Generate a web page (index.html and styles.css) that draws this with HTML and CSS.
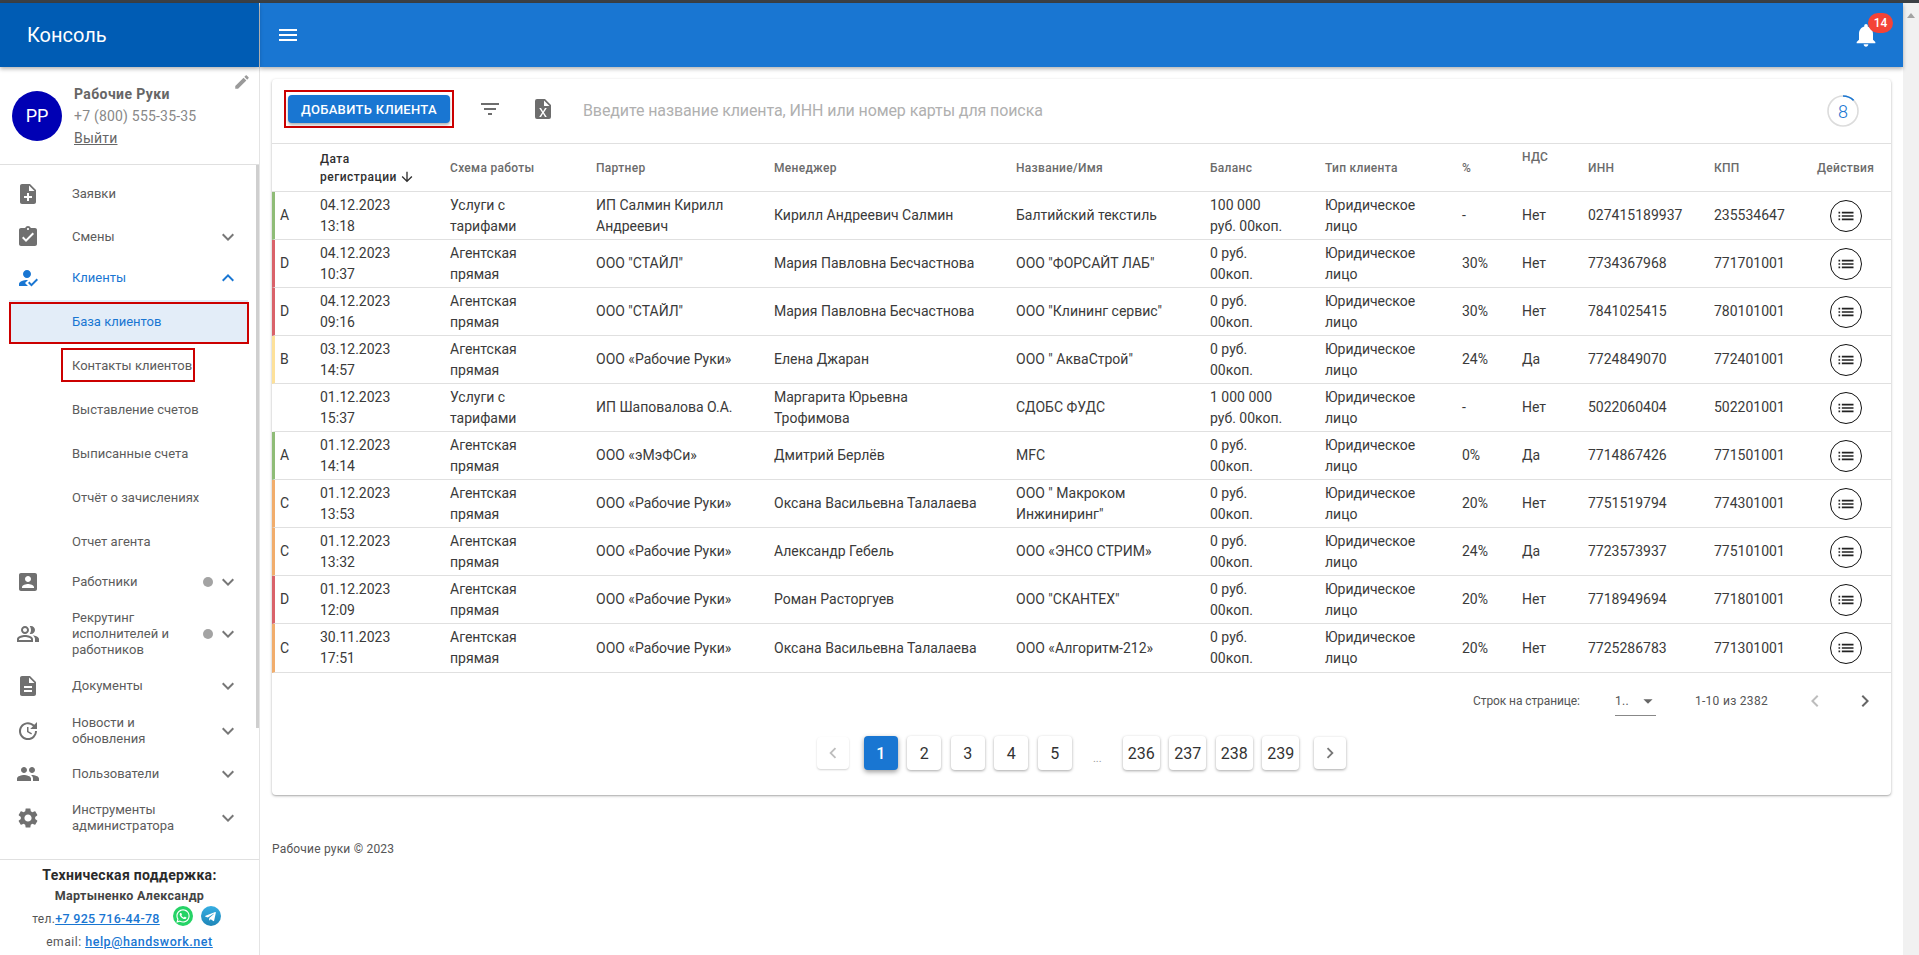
FILE: index.html
```html
<!DOCTYPE html>
<html lang="ru">
<head>
<meta charset="utf-8">
<title>Консоль</title>
<link rel="stylesheet" href="styles.css">
</head>
<body>
<svg class="sprite" aria-hidden="true">
  <symbol id="i-noteadd" viewBox="0 0 24 24"><path d="M14 2H6c-1.1 0-1.99.9-1.99 2L4 20c0 1.1.89 2 1.99 2H18c1.1 0 2-.9 2-2V8l-6-6zm2 14h-3v3h-2v-3H8v-2h3v-3h2v3h3v2zm-3-7V3.5L18.5 9H13z"/></symbol>
  <symbol id="i-assign" viewBox="0 0 24 24"><path d="M19 3h-4.18C14.4 1.84 13.3 1 12 1c-1.3 0-2.4.84-2.82 2H5c-1.1 0-2 .9-2 2v14c0 1.1.9 2 2 2h14c1.1 0 2-.9 2-2V5c0-1.1-.9-2-2-2zm-7 0c.55 0 1 .45 1 1s-.45 1-1 1-1-.45-1-1 .45-1 1-1zm-2 14l-4-4 1.41-1.41L10 14.17l6.59-6.59L18 9l-8 8z"/></symbol>
  <symbol id="i-howto" viewBox="0 0 24 24"><path d="M9 17l3-2.94c-.39-.04-.68-.06-1-.06-2.67 0-8 1.34-8 4v2h9l-3-3zm2-5c2.21 0 4-1.79 4-4s-1.79-4-4-4-4 1.79-4 4 1.79 4 4 4"/><path d="M15.47 20.5L12 17l1.4-1.41 2.07 2.08 5.13-5.17 1.4 1.41z"/></symbol>
  <symbol id="i-box" viewBox="0 0 24 24"><path d="M3 5v14c0 1.1.89 2 2 2h14c1.1 0 2-.9 2-2V5c0-1.1-.9-2-2-2H5c-1.11 0-2 .9-2 2zm12 4c0 1.66-1.34 3-3 3s-3-1.34-3-3 1.34-3 3-3 3 1.34 3 3zm-9 8c0-2 4-3.1 6-3.1s6 1.1 6 3.1v1H6v-1z"/></symbol>
  <symbol id="i-peoplealt" viewBox="0 0 24 24"><path d="M16.67 13.13C18.04 14.06 19 15.32 19 17v3h4v-3c0-2.18-3.57-3.47-6.33-3.87zM9 12c2.21 0 4-1.79 4-4s-1.79-4-4-4-4 1.79-4 4 1.79 4 4 4zm0-6c1.1 0 2 .9 2 2s-.9 2-2 2-2-.9-2-2 .9-2 2-2zM15 12c2.21 0 4-1.79 4-4s-1.79-4-4-4c-.47 0-.91.1-1.33.24C14.5 5.27 15 6.58 15 8s-.5 2.73-1.33 3.76c.42.14.86.24 1.33.24zM9 13c-2.67 0-8 1.34-8 4v3h16v-3c0-2.66-5.33-4-8-4zm6 5H3v-.99C3.2 16.29 6.3 15 9 15s5.8 1.29 6 2z"/></symbol>
  <symbol id="i-doc" viewBox="0 0 24 24"><path d="M14 2H6c-1.1 0-1.99.9-1.99 2L4 20c0 1.1.89 2 1.99 2H18c1.1 0 2-.9 2-2V8l-6-6zm2 16H8v-2h8v2zm0-4H8v-2h8v2zm-3-5V3.5L18.5 9H13z"/></symbol>
  <symbol id="i-update" viewBox="0 0 24 24"><path d="M21 10.12h-6.78l2.74-2.82c-2.73-2.7-7.15-2.8-9.88-.1-2.73 2.71-2.73 7.08 0 9.79s7.15 2.71 9.88 0C18.32 15.65 19 14.08 19 12.1h2c0 1.98-.88 4.55-2.64 6.29-3.51 3.48-9.21 3.48-12.72 0-3.5-3.47-3.53-9.11-.02-12.58s9.14-3.47 12.65 0L21 3v7.12zM12.5 8v4.25l3.5 2.08-.72 1.21L11 13V8h1.5z"/></symbol>
  <symbol id="i-people" viewBox="0 0 24 24"><path d="M16 11c1.66 0 2.99-1.34 2.99-3S17.66 5 16 5c-1.66 0-3 1.34-3 3s1.34 3 3 3zm-8 0c1.66 0 2.99-1.34 2.99-3S9.66 5 8 5C6.34 5 5 6.34 5 8s1.34 3 3 3zm0 2c-2.33 0-7 1.17-7 3.5V19h14v-2.5c0-2.33-4.67-3.5-7-3.5zm8 0c-.29 0-.62.02-.97.05 1.16.84 1.97 1.97 1.97 3.45V19h6v-2.5c0-2.33-4.67-3.5-7-3.5z"/></symbol>
  <symbol id="i-gear" viewBox="0 0 24 24"><path d="M19.14 12.94c.04-.3.06-.61.06-.94 0-.32-.02-.64-.07-.94l2.03-1.58c.18-.14.23-.41.12-.61l-1.92-3.32c-.12-.22-.37-.29-.59-.22l-2.39.96c-.5-.38-1.03-.7-1.62-.94l-.36-2.54c-.04-.24-.24-.41-.48-.41h-3.84c-.24 0-.43.17-.47.41l-.36 2.54c-.59.24-1.13.57-1.62.94l-2.39-.96c-.22-.08-.47 0-.59.22L2.74 8.87c-.12.21-.08.47.12.61l2.03 1.58c-.05.3-.09.63-.09.94s.02.64.07.94l-2.03 1.58c-.18.14-.23.41-.12.61l1.92 3.32c.12.22.37.29.59.22l2.39-.96c.5.38 1.03.7 1.62.94l.36 2.54c.05.24.24.41.48.41h3.84c.24 0 .44-.17.47-.41l.36-2.54c.59-.24 1.13-.56 1.62-.94l2.39.96c.22.08.47 0 .59-.22l1.92-3.32c.12-.22.07-.47-.12-.61l-2.01-1.58zM12 15.6c-1.98 0-3.6-1.62-3.6-3.6s1.62-3.6 3.6-3.6 3.6 1.62 3.6 3.6-1.62 3.6-3.6 3.6z"/></symbol>
  <symbol id="i-more" viewBox="0 0 24 24"><path d="M16.59 8.59L12 13.17 7.41 8.59 6 10l6 6 6-6z"/></symbol>
  <symbol id="i-less" viewBox="0 0 24 24"><path d="M12 8l-6 6 1.41 1.41L12 10.83l4.59 4.58L18 14z"/></symbol>
  <symbol id="i-menu" viewBox="0 0 24 24"><path d="M3 18h18v-2H3v2zm0-5h18v-2H3v2zm0-7v2h18V6H3z"/></symbol>
  <symbol id="i-bell" viewBox="0 0 24 24"><path d="M12 22c1.1 0 2-.9 2-2h-4c0 1.1.89 2 2 2zm6-6v-5c0-3.07-1.64-5.64-4.5-6.32V4c0-.83-.67-1.5-1.5-1.5s-1.5.67-1.5 1.5v.68C7.63 5.36 6 7.92 6 11v5l-2 2v1h16v-1l-2-2z"/></symbol>
  <symbol id="i-edit" viewBox="0 0 24 24"><path d="M3 17.25V21h3.75L17.81 9.94l-3.75-3.75L3 17.25zM20.71 7.04c.39-.39.39-1.02 0-1.41l-2.34-2.34c-.39-.39-1.02-.39-1.41 0l-1.83 1.83 3.75 3.75 1.83-1.83z"/></symbol>
  <symbol id="i-filter" viewBox="0 0 24 24"><path d="M10 18h4v-2h-4v2zM3 6v2h18V6H3zm3 7h12v-2H6v2z"/></symbol>
  <symbol id="i-excel" viewBox="0 0 24 24"><path d="M14,2H6A2,2 0 0,0 4,4V20A2,2 0 0,0 6,22H18A2,2 0 0,0 20,20V8L14,2M15.8,20H14L12,16.6L10,20H8.2L11.1,15.5L8.2,11H10L12,14.4L14,11H15.8L12.9,15.5L15.8,20M13,9V3.5L18.5,9H13Z"/></symbol>
  <symbol id="i-down" viewBox="0 0 24 24"><path d="M20 12l-1.41-1.41L13 16.17V4h-2v12.17l-5.58-5.59L4 12l8 8 8-8z"/></symbol>
  <symbol id="i-left" viewBox="0 0 24 24"><path d="M15.41 7.41L14 6l-6 6 6 6 1.41-1.41L10.83 12z"/></symbol>
  <symbol id="i-right" viewBox="0 0 24 24"><path d="M10 6L8.59 7.41 13.17 12l-4.58 4.59L10 18l6-6z"/></symbol>
  <symbol id="i-drop" viewBox="0 0 24 24"><path d="M7 10l5 5 5-5z"/></symbol>
  <symbol id="i-list" viewBox="0 0 24 24"><path d="M3 13h2v-2H3v2zm0 4h2v-2H3v2zm0-8h2V7H3v2zm4 4h14v-2H7v2zm0 4h14v-2H7v2zM7 7v2h14V7H7z"/></symbol>
  <symbol id="i-wa" viewBox="0 0 24 24"><path d="M12.04 2C6.58 2 2.13 6.45 2.13 11.91C2.13 13.66 2.59 15.36 3.45 16.86L2.05 22L7.3 20.62C8.75 21.41 10.38 21.83 12.04 21.83C17.5 21.83 21.95 17.38 21.95 11.92C21.95 9.27 20.92 6.78 19.05 4.91C17.18 3.03 14.69 2 12.04 2M12.05 3.67C14.25 3.67 16.31 4.53 17.87 6.09C19.42 7.65 20.28 9.72 20.28 11.92C20.28 16.46 16.58 20.15 12.04 20.15C10.56 20.15 9.11 19.76 7.85 19L7.55 18.83L4.43 19.65L5.26 16.61L5.06 16.29C4.24 15 3.8 13.47 3.8 11.91C3.81 7.37 7.5 3.67 12.05 3.67M8.53 7.33C8.37 7.33 8.1 7.39 7.87 7.64C7.65 7.89 7 8.5 7 9.71C7 10.93 7.89 12.1 8 12.27C8.14 12.44 9.76 14.94 12.25 16C12.84 16.27 13.3 16.42 13.66 16.53C14.25 16.72 14.79 16.69 15.22 16.63C15.7 16.56 16.68 16.03 16.89 15.45C17.1 14.87 17.1 14.38 17.04 14.27C16.97 14.17 16.81 14.11 16.56 14C16.31 13.86 15.09 13.26 14.87 13.18C14.64 13.1 14.5 13.06 14.31 13.3C14.15 13.55 13.67 14.11 13.53 14.27C13.38 14.44 13.24 14.46 13 14.34C12.74 14.21 11.94 13.95 11 13.11C10.26 12.45 9.77 11.64 9.62 11.39C9.5 11.15 9.61 11 9.73 10.89C9.84 10.78 10 10.6 10.1 10.45C10.23 10.31 10.27 10.2 10.35 10.04C10.43 9.87 10.39 9.73 10.33 9.61C10.27 9.5 9.77 8.26 9.56 7.77C9.36 7.29 9.16 7.35 9 7.34C8.86 7.34 8.7 7.33 8.53 7.33Z"/></symbol>
  <symbol id="i-tg" viewBox="0 0 24 24"><path d="M5.4 11.8l11.6-4.5c.5-.2 1 .1.8.9l-2 9.3c-.1.7-.5.8-1.1.5l-3-2.2-1.4 1.4c-.2.2-.3.3-.6.3l.2-3 5.5-5c.2-.2 0-.3-.4-.1l-6.8 4.3-2.9-.9c-.6-.2-.6-.6.1-.9z"/></symbol>
</svg>

<div class="topstrip"></div>
<div class="shell">
  <aside class="sidebar">
    <div class="brand">Консоль</div>
    <div class="user">
      <div class="avatar">PP</div>
      <div class="user-text">
        <div class="user-name">Рабочие Руки</div>
        <div class="user-phone">+7 (800) 555-35-35</div>
        <a class="user-exit">Выйти</a>
      </div>
      <svg class="user-edit"><use href="#i-edit"/></svg>
    </div>
    <nav class="nav">
      <div class="nav-spacer"></div>
      <div class="item h44"><svg class="item-ic"><use href="#i-noteadd"/></svg><span class="item-label">Заявки</span></div>
      <div class="item h42"><svg class="item-ic"><use href="#i-assign"/></svg><span class="item-label">Смены</span><svg class="chev"><use href="#i-more"/></svg></div>
      <div class="item h40 open"><svg class="item-ic"><use href="#i-howto"/></svg><span class="item-label">Клиенты</span><svg class="chev"><use href="#i-less"/></svg></div>
      <div class="item h44 sub current"><span class="item-label">База клиентов</span></div>
      <div class="item h44 sub"><span class="item-label">Контакты клиентов</span></div>
      <div class="item h44 sub"><span class="item-label">Выставление счетов</span></div>
      <div class="item h44 sub"><span class="item-label">Выписанные счета</span></div>
      <div class="item h44 sub"><span class="item-label">Отчёт о зачислениях</span></div>
      <div class="item h44 sub"><span class="item-label">Отчет агента</span></div>
      <div class="item h36"><svg class="item-ic"><use href="#i-box"/></svg><span class="item-label">Работники</span><i class="dot"></i><svg class="chev"><use href="#i-more"/></svg></div>
      <div class="item h68"><svg class="item-ic"><use href="#i-peoplealt"/></svg><span class="item-label">Рекрутинг<br>исполнителей и<br>работников</span><i class="dot"></i><svg class="chev"><use href="#i-more"/></svg></div>
      <div class="item h36"><svg class="item-ic"><use href="#i-doc"/></svg><span class="item-label">Документы</span><svg class="chev"><use href="#i-more"/></svg></div>
      <div class="item h54"><svg class="item-ic"><use href="#i-update"/></svg><span class="item-label">Новости и<br>обновления</span><svg class="chev"><use href="#i-more"/></svg></div>
      <div class="item h32"><svg class="item-ic"><use href="#i-people"/></svg><span class="item-label">Пользователи</span><svg class="chev"><use href="#i-more"/></svg></div>
      <div class="item h56"><svg class="item-ic"><use href="#i-gear"/></svg><span class="item-label">Инструменты<br>администратора</span><svg class="chev"><use href="#i-more"/></svg></div>
      <div class="mark mark-base"></div>
      <div class="mark mark-contacts"></div>
      <div class="nav-thumb"></div>
    </nav>
    <div class="support">
      <div class="support-title">Техническая поддержка:</div>
      <div class="support-name">Мартыненко Александр</div>
      <div class="support-line phone">тел.<a class="support-link">+7 925 716-44-78</a><span class="wa"><svg><use href="#i-wa"/></svg></span><span class="tg"><svg><use href="#i-tg"/></svg></span></div>
      <div class="support-line mail">email: <a class="support-link">help@handswork.net</a></div>
    </div>
  </aside>

  <div class="main">
    <header class="appbar">
      <svg class="burger"><use href="#i-menu"/></svg>
      <div class="bell"><svg><use href="#i-bell"/></svg><span class="badge">14</span></div>
    </header>
    <div class="content">
      <section class="card">
        <div class="toolbar">
          <div class="add-frame"><button class="add-btn">ДОБАВИТЬ КЛИЕНТА</button></div>
          <svg class="tool-ic filter"><use href="#i-filter"/></svg>
          <svg class="tool-ic excel"><use href="#i-excel"/></svg>
          <div class="search">Введите название клиента, ИНН или номер карты для поиска</div>
          <div class="counter">
            <svg viewBox="0 0 32 32"><circle class="ring" cx="16" cy="16" r="15"/><path class="arc" d="M16 1A15 15 0 0 1 26.6 5.4"/></svg>
            <span>8</span>
          </div>
        </div>
        <table class="grid">
          <colgroup>
            <col class="c0"><col class="c1"><col class="c2"><col class="c3"><col class="c4"><col class="c5"><col class="c6"><col class="c7"><col class="c8"><col class="c9"><col class="c10"><col class="c11"><col class="c12">
          </colgroup>
          <thead>
            <tr>
              <th></th>
              <th class="sorted">Дата<br>регистрации<svg class="sort"><use href="#i-down"/></svg></th>
              <th>Схема работы</th>
              <th>Партнер</th>
              <th>Менеджер</th>
              <th>Название/Имя</th>
              <th>Баланс</th>
              <th>Тип клиента</th>
              <th>%</th>
              <th class="raised">НДС</th>
              <th>ИНН</th>
              <th>КПП</th>
              <th>Действия</th>
            </tr>
          </thead>
          <tbody>
            <tr class="g-a"><td>A</td><td>04.12.2023<br>13:18</td><td>Услуги с<br>тарифами</td><td>ИП Салмин Кирилл<br>Андреевич</td><td>Кирилл Андреевич Салмин</td><td>Балтийский текстиль</td><td>100 000<br>руб. 00коп.</td><td>Юридическое<br>лицо</td><td>-</td><td>Нет</td><td>027415189937</td><td>235534647</td><td><span class="act"><svg><use href="#i-list"/></svg></span></td></tr>
            <tr class="g-d"><td>D</td><td>04.12.2023<br>10:37</td><td>Агентская<br>прямая</td><td>ООО "СТАЙЛ"</td><td>Мария Павловна Бесчастнова</td><td>ООО "ФОРСАЙТ ЛАБ"</td><td>0 руб.<br>00коп.</td><td>Юридическое<br>лицо</td><td>30%</td><td>Нет</td><td>7734367968</td><td>771701001</td><td><span class="act"><svg><use href="#i-list"/></svg></span></td></tr>
            <tr class="g-d"><td>D</td><td>04.12.2023<br>09:16</td><td>Агентская<br>прямая</td><td>ООО "СТАЙЛ"</td><td>Мария Павловна Бесчастнова</td><td>ООО "Клининг сервис"</td><td>0 руб.<br>00коп.</td><td>Юридическое<br>лицо</td><td>30%</td><td>Нет</td><td>7841025415</td><td>780101001</td><td><span class="act"><svg><use href="#i-list"/></svg></span></td></tr>
            <tr class="g-b"><td>B</td><td>03.12.2023<br>14:57</td><td>Агентская<br>прямая</td><td>ООО «Рабочие Руки»</td><td>Елена Джаран</td><td>ООО " АкваСтрой"</td><td>0 руб.<br>00коп.</td><td>Юридическое<br>лицо</td><td>24%</td><td>Да</td><td>7724849070</td><td>772401001</td><td><span class="act"><svg><use href="#i-list"/></svg></span></td></tr>
            <tr><td></td><td>01.12.2023<br>15:37</td><td>Услуги с<br>тарифами</td><td>ИП Шаповалова О.А.</td><td>Маргарита Юрьевна<br>Трофимова</td><td>СДОБС ФУДС</td><td>1 000 000<br>руб. 00коп.</td><td>Юридическое<br>лицо</td><td>-</td><td>Нет</td><td>5022060404</td><td>502201001</td><td><span class="act"><svg><use href="#i-list"/></svg></span></td></tr>
            <tr class="g-a"><td>A</td><td>01.12.2023<br>14:14</td><td>Агентская<br>прямая</td><td>ООО «эМэФСи»</td><td>Дмитрий Берлёв</td><td>MFC</td><td>0 руб.<br>00коп.</td><td>Юридическое<br>лицо</td><td>0%</td><td>Да</td><td>7714867426</td><td>771501001</td><td><span class="act"><svg><use href="#i-list"/></svg></span></td></tr>
            <tr class="g-c"><td>C</td><td>01.12.2023<br>13:53</td><td>Агентская<br>прямая</td><td>ООО «Рабочие Руки»</td><td>Оксана Васильевна Талалаева</td><td>ООО " Макроком<br>Инжиниринг"</td><td>0 руб.<br>00коп.</td><td>Юридическое<br>лицо</td><td>20%</td><td>Нет</td><td>7751519794</td><td>774301001</td><td><span class="act"><svg><use href="#i-list"/></svg></span></td></tr>
            <tr class="g-c"><td>C</td><td>01.12.2023<br>13:32</td><td>Агентская<br>прямая</td><td>ООО «Рабочие Руки»</td><td>Александр Гебель</td><td>ООО «ЭНСО СТРИМ»</td><td>0 руб.<br>00коп.</td><td>Юридическое<br>лицо</td><td>24%</td><td>Да</td><td>7723573937</td><td>775101001</td><td><span class="act"><svg><use href="#i-list"/></svg></span></td></tr>
            <tr class="g-d"><td>D</td><td>01.12.2023<br>12:09</td><td>Агентская<br>прямая</td><td>ООО «Рабочие Руки»</td><td>Роман Расторгуев</td><td>ООО "СКАНТЕХ"</td><td>0 руб.<br>00коп.</td><td>Юридическое<br>лицо</td><td>20%</td><td>Нет</td><td>7718949694</td><td>771801001</td><td><span class="act"><svg><use href="#i-list"/></svg></span></td></tr>
            <tr class="g-c"><td>C</td><td>30.11.2023<br>17:51</td><td>Агентская<br>прямая</td><td>ООО «Рабочие Руки»</td><td>Оксана Васильевна Талалаева</td><td>ООО «Алгоритм-212»</td><td>0 руб.<br>00коп.</td><td>Юридическое<br>лицо</td><td>20%</td><td>Нет</td><td>7725286783</td><td>771301001</td><td><span class="act"><svg><use href="#i-list"/></svg></span></td></tr>
          </tbody>
        </table>
        <div class="pager">
          <span class="pager-label">Строк на странице:</span>
          <div class="rows-select"><span>1..</span><svg><use href="#i-drop"/></svg></div>
          <span class="range">1-10 из 2382</span>
          <svg class="pager-prev"><use href="#i-left"/></svg>
          <svg class="pager-next"><use href="#i-right"/></svg>
        </div>
        <div class="pages">
          <button class="pg arrow off"><svg><use href="#i-left"/></svg></button>
          <button class="pg first active">1</button>
          <button class="pg">2</button>
          <button class="pg">3</button>
          <button class="pg">4</button>
          <button class="pg">5</button>
          <span class="dots">...</span>
          <button class="pg wide">236</button>
          <button class="pg wide">237</button>
          <button class="pg wide">238</button>
          <button class="pg wide last">239</button>
          <button class="pg arrow"><svg><use href="#i-right"/></svg></button>
        </div>
      </section>
      <footer class="copy">Рабочие руки © 2023</footer>
    </div>
  </div>
  <div class="page-scroll"><i></i></div>
</div>
</body>
</html>
```

FILE: styles.css
```css
* { box-sizing: border-box; }
html, body { margin: 0; height: 100%; }
body {
  height: 955px;
  overflow: hidden;
  background: #fff;
  font-family: Roboto, "Liberation Sans", sans-serif;
  font-size: 14px;
  color: #333;
  display: flex;
  flex-direction: column;
}
.sprite { display: none; }
svg { fill: currentColor; display: block; }
button { font-family: inherit; border: 0; padding: 0; cursor: pointer; }

.topstrip { height: 3px; flex: none; background: #3b4045; }
.shell { flex: 1; display: flex; min-height: 0; }

/* sidebar */
.sidebar {
  width: 260px;
  flex: none;
  display: flex;
  flex-direction: column;
  border-right: 1px solid #e4e4e4;
  background: #fff;
}
.brand {
  height: 64px;
  flex: none;
  background: #005cb4;
  color: #fff;
  font-size: 20px;
  line-height: 64px;
  padding-left: 27px;
  box-shadow: 0 2px 4px rgba(0,0,0,.3);
  position: relative;
  z-index: 2;
}
.user {
  height: 98px;
  flex: none;
  display: flex;
  align-items: center;
  padding-left: 12px;
  gap: 12px;
  border-bottom: 1px solid #e0e0e0;
  position: relative;
}
.avatar {
  width: 50px;
  height: 50px;
  border-radius: 50%;
  background: #0000b4;
  color: #fff;
  font-size: 18px;
  display: flex;
  align-items: center;
  justify-content: center;
}
.user-text { line-height: 22px; font-size: 14px; color: #888; letter-spacing: .2px; }
.user-name { font-weight: 700; color: #666; font-size: 14px; letter-spacing: .4px; }
.user-exit { color: #666; text-decoration: underline; display: block; }
.user-edit { position: absolute; top: 6px; right: 8px; width: 18px; height: 18px; color: #9a9a9a; }

.nav { flex: 1; min-height: 0; position: relative; overflow: hidden; padding-right: 4px; }
.nav-spacer { height: 7px; }
.item {
  display: flex;
  align-items: center;
  padding-left: 16px;
  padding-right: 12px;
  color: #5c5c5c;
  line-height: 16px;
  font-size: 13px;
}
.h32 { height: 32px; } .h36 { height: 36px; } .h40 { height: 40px; }
.h42 { height: 42px; } .h44 { height: 44px; } .h54 { height: 54px; }
.h56 { height: 56px; } .h68 { height: 68px; }
.item-ic { width: 24px; height: 24px; color: #707070; flex: none; margin-right: 32px; }
.item-label { flex: 1; min-width: 0; }
.sub .item-label { margin-left: 56px; }
.item.open { color: #1976d2; margin-bottom: 2px; }
.item.open .item-ic, .item.open .chev { color: #1976d2; }
.item.current { color: #1976d2; background: #e3edf8; margin-left: 9px; margin-right: 7px; padding-left: 7px; }
.chev { width: 24px; height: 24px; color: #777; flex: none; margin-right: 3px; }
.dot { width: 10px; height: 10px; border-radius: 50%; background: #a3a3a3; flex: none; margin-right: 3px; }
.mark { position: absolute; border: 2px solid #cc0000; pointer-events: none; }
.mark-base { left: 9px; top: 137px; width: 240px; height: 42px; }
.mark-contacts { left: 61px; top: 183px; width: 134px; height: 34px; }
.nav-thumb { position: absolute; right: 0; top: 0; width: 3px; height: 563px; background: #cfcfcf; }

.support {
  height: 96px;
  flex: none;
  border-top: 1px solid #e0e0e0;
  text-align: center;
  padding-top: 5px;
  color: #333;
  letter-spacing: .3px;
}
.support-title { font-weight: 700; font-size: 14px; line-height: 21px; color: #2b2b2b; }
.support-name { font-weight: 700; font-size: 12.5px; line-height: 19px; color: #444; }
.support-line {
  display: flex;
  justify-content: center;
  align-items: center;
  font-size: 12px;
  height: 23px;
  color: #555;
  white-space: pre;
}
.support-line.phone { margin-top: 2px; padding-right: 6px; }
.support-line.mail { letter-spacing: .55px; }
.support-link { color: #1976d2; text-decoration: underline; font-weight: 500; font-size: 12.5px; }
.wa, .tg {
  width: 20px;
  height: 20px;
  border-radius: 50%;
  display: flex;
  align-items: center;
  justify-content: center;
  color: #fff;
  margin-top: -5px;
}
.wa { background: #25d366; margin-left: 13px; }
.tg { background: linear-gradient(180deg, #37aee2, #1e86b8); margin-left: 8px; }
.wa svg { width: 16px; height: 16px; }
.tg svg { width: 20px; height: 20px; }

/* main */
.main { flex: 1; min-width: 0; display: flex; flex-direction: column; background: #fff; }
.appbar {
  height: 64px;
  flex: none;
  background: #1976d2;
  color: #fff;
  display: flex;
  align-items: center;
  justify-content: space-between;
  padding: 0 23px 0 16px;
  box-shadow: 0 2px 4px rgba(0,0,0,.3);
  position: relative;
  z-index: 1;
}
.burger { width: 24px; height: 24px; }
.bell { position: relative; width: 28px; height: 28px; }
.bell svg { width: 28px; height: 28px; }
.badge {
  position: absolute;
  left: 16px;
  top: -8px;
  width: 25px;
  height: 20px;
  border-radius: 10px;
  background: #f44336;
  color: #fff;
  font-size: 12px;
  font-weight: 500;
  line-height: 20px;
  text-align: center;
}
.content { flex: 1; padding: 12px 12px 0; min-height: 0; }
.card {
  height: 716px;
  background: #fff;
  border-radius: 4px;
  box-shadow: 0 1px 3px rgba(0,0,0,.28), 0 1px 1px rgba(0,0,0,.1);
}
.toolbar {
  height: 64px;
  display: flex;
  align-items: center;
  padding: 0 32px 4px 12px;
}
.add-frame { border: 2px solid #cc0000; padding: 3px 2px; }
.add-btn {
  width: 162px;
  height: 28px;
  display: block;
  background: #1976d2;
  color: #fff;
  font-size: 13px;
  font-weight: 500;
  letter-spacing: .3px;
  border-radius: 4px;
  box-shadow: 0 2px 3px rgba(0,0,0,.3);
}
.tool-ic { width: 24px; height: 24px; color: #6d6d6d; flex: none; }
.filter { margin-left: 24px; }
.excel { margin-left: 29px; }
.search { flex: 1; margin-left: 28px; font-size: 16px; color: #b0b0b0; padding-top: 2px; letter-spacing: -.1px; }
.counter {
  width: 32px;
  height: 32px;
  position: relative;
  display: flex;
  align-items: center;
  justify-content: center;
  color: #1976d2;
  font-size: 18px;
  font-weight: 300;
  margin-top: 4px;
}
.counter svg { position: absolute; inset: 0; width: 32px; height: 32px; fill: none; }
.ring { stroke: #dcdcdc; stroke-width: 1.6; }
.arc { stroke: #1976d2; stroke-width: 1.6; }

.grid { width: 100%; table-layout: fixed; border-collapse: separate; border-spacing: 0; border-top: 1px solid #e0e0e0; }
.c0 { width: 48px; } .c1 { width: 130px; } .c2 { width: 146px; } .c3 { width: 178px; }
.c4 { width: 242px; } .c5 { width: 194px; } .c6 { width: 115px; } .c7 { width: 137px; }
.c8 { width: 60px; } .c9 { width: 66px; } .c10 { width: 126px; } .c11 { width: 103px; } .c12 { width: 74px; }
.grid th {
  height: 48px;
  padding: 0;
  text-align: left;
  font-size: 12px;
  font-weight: 500;
  line-height: 18px;
  color: #6b6b6b;
  letter-spacing: .3px;
  border-bottom: 1px solid #e0e0e0;
}
.grid th.sorted { color: #2f2f2f; letter-spacing: .5px; }
.grid th.raised { vertical-align: top; padding-top: 4px; }
.sort { display: inline-block; width: 16px; height: 16px; vertical-align: -4px; margin-left: 2px; }
.grid td {
  height: 48px;
  padding: 0;
  line-height: 21px;
  font-size: 14px;
  color: #3a3a3a;
  border-bottom: 1px solid #e0e0e0;
  vertical-align: middle;
}
.grid tbody tr:last-child td { height: 49px; }
.grid td:first-child { padding-left: 5px; border-left: 3px solid transparent; }
.g-a td:first-child { border-left-color: #8fbc77; }
.g-b td:first-child { border-left-color: #fde19a; }
.g-c td:first-child { border-left-color: #f1ad6c; }
.g-d td:first-child { border-left-color: #d9626a; }
.act {
  display: flex;
  align-items: center;
  justify-content: center;
  width: 32px;
  height: 32px;
  border: 1px solid #111;
  border-radius: 50%;
  margin-left: 13px;
  color: #222;
}
.act svg { width: 20px; height: 20px; }

.pager {
  height: 63px;
  display: flex;
  align-items: center;
  justify-content: flex-end;
  padding: 0 14px 7px 0;
  font-size: 12px;
  color: #555;
  letter-spacing: .3px;
}
.pager-label { letter-spacing: -.1px; }
.rows-select {
  width: 41px;
  height: 30px;
  margin-left: 35px;
  border-bottom: 1px solid #888;
  display: flex;
  align-items: center;
  justify-content: space-between;
}
.rows-select svg { width: 22px; height: 22px; color: #666; flex: none; margin-right: -3px; }
.range { margin-left: 39px; }
.pager-prev, .pager-next { width: 24px; height: 24px; flex: none; }
.pager-prev { margin-left: 35px; color: #bdbdbd; }
.pager-next { margin-left: 26px; color: #666; }

.pages { display: flex; justify-content: center; align-items: center; gap: 9.5px; }
.pg {
  width: 34px;
  height: 34px;
  background: #fff;
  border-radius: 4px;
  font-size: 16px;
  color: #333;
  box-shadow: 0 1px 3px rgba(0,0,0,.35);
  display: flex;
  align-items: center;
  justify-content: center;
}
.pg svg { width: 22px; height: 22px; color: #777; }
.pg.wide { width: 37px; }
.pg.active { background: #1976d2; color: #fff; font-weight: 500; box-shadow: 0 2px 5px rgba(0,0,0,.4); }
.pg.arrow { width: 32px; height: 32px; }
.pg.off { box-shadow: 0 1px 2px rgba(0,0,0,.18); }
.pg.off svg { color: #bdbdbd; }
.pg.first { margin-left: 5px; }
.pg.last { margin-right: 5px; }
.dots { width: 32px; text-align: center; color: #999; font-size: 11px; padding-top: 10px; }

.copy { font-size: 12px; color: #555; margin-top: 47px; line-height: 14px; letter-spacing: .2px; }

.page-scroll { width: 16px; flex: none; background: #f1f1f1; position: relative; }
.page-scroll i {
  position: absolute;
  left: 4px;
  top: 10px;
  border-left: 4px solid transparent;
  border-right: 4px solid transparent;
  border-bottom: 5px solid #a3a3a3;
}
```
